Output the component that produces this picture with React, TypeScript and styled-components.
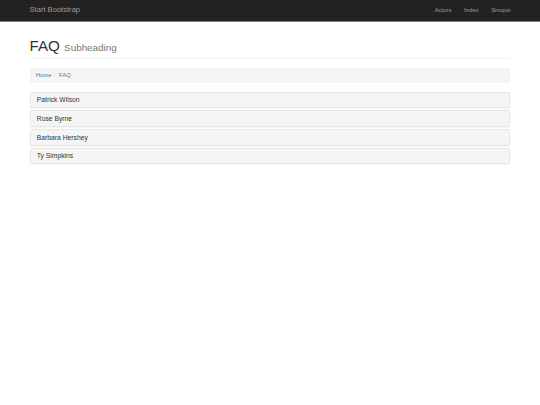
import React from 'react';
import styled, { createGlobalStyle } from 'styled-components';

// the page is a bootstrap 3 layout photographed at 1280 wide and shrunk to 540
const S = 540 / 1280;
const px = (n: number) => `${(n * S).toFixed(3)}px`;

const GlobalStyle = createGlobalStyle`
  * { box-sizing: border-box; }
  html, body {
    margin: 0;
    background: #fff;
  }
  body {
    padding-top: ${px(50)};
    font-family: "Liberation Sans", Arial, Helvetica, sans-serif;
    font-size: ${px(14)};
    line-height: 1.428571;
    color: #333;
  }
`;

const Container = styled.div`
  width: ${px(1170)};
  margin: 0 auto;
  padding: 0 ${px(15)};
`;

const Navbar = styled.nav`
  position: fixed;
  top: 0;
  left: 0;
  right: 0;
  z-index: 10;
  height: 22px;
  background: #222;
  border-bottom: 1px solid #7d7d7d;
`;

const NavInner = styled(Container)`
  display: flex;
  align-items: center;
  justify-content: space-between;
  height: 21px;
`;

const Brand = styled.a`
  margin-left: -${px(15)};
  padding: 0 ${px(15)};
  font-size: ${px(18)};
  line-height: ${px(20)};
  color: #9d9d9d;
  text-decoration: none;
`;

const NavLinks = styled.ul`
  display: flex;
  list-style: none;
  margin: 0 -${px(15)} 0 0;
  padding: 0;
`;

const NavLink = styled.a`
  display: block;
  padding: 0 ${px(15)};
  font-size: ${px(14)};
  line-height: ${px(20)};
  color: #9d9d9d;
  text-decoration: none;
`;

const PageHeader = styled.h1`
  margin: ${px(40)} 0 ${px(20)};
  padding-bottom: ${px(9)};
  border-bottom: 1px solid #f2f2f2;
  font-size: ${px(36)};
  font-weight: 500;
  line-height: 1.1;
  color: #333;

  small {
    font-size: 65%;
    font-weight: 400;
    color: #777;
  }
`;

const Breadcrumb = styled.ol`
  display: flex;
  list-style: none;
  margin: 0 0 ${px(20)};
  padding: ${px(8)} ${px(15)};
  background: #f5f5f5;
  border-radius: ${px(4)};
  font-size: ${px(14)};
  line-height: ${px(20)};

  li + li::before {
    content: '/\\00a0';
    padding: 0 ${px(5)};
    color: #ccc;
  }
`;

const Crumb = styled.li<{ $active?: boolean }>`
  color: ${p => (p.$active ? '#777' : '#333')};

  a {
    color: #337ab7;
    text-decoration: none;
  }
`;

const PanelGroup = styled.div`
  display: flex;
  flex-direction: column;
  gap: ${px(5)};
  margin-bottom: ${px(20)};
`;

const Panel = styled.div`
  background: #f5f5f5;
  border: 1px solid #e6e6e6;
  border-radius: ${px(4)};
  box-shadow: 0 1px 1px rgba(0, 0, 0, 0.04);
`;

const PanelTitle = styled.h4`
  margin: 0;
  padding: 3.6px ${px(15)};
  font-size: ${px(16)};
  font-weight: 500;
  line-height: 1.1;
  color: #333;
`;

const people = ['Patrick Wilson', 'Rose Byrne', 'Barbara Hershey', 'Ty Simpkins'];

export default function App() {
  return (
    <>
      <GlobalStyle />
      <Navbar>
        <NavInner>
          <Brand href="#">Start Bootstrap</Brand>
          <NavLinks>
            <li><NavLink href="#">Actors</NavLink></li>
            <li><NavLink href="#">Index</NavLink></li>
            <li><NavLink href="#">Sinopsi</NavLink></li>
          </NavLinks>
        </NavInner>
      </Navbar>
      <Container>
        <PageHeader>
          FAQ <small>Subheading</small>
        </PageHeader>
        <Breadcrumb>
          <Crumb><a href="#">Home</a></Crumb>
          <Crumb $active>FAQ</Crumb>
        </Breadcrumb>
        <PanelGroup>
          {people.map(name => (
            <Panel key={name}>
              <PanelTitle>{name}</PanelTitle>
            </Panel>
          ))}
        </PanelGroup>
      </Container>
    </>
  );
}
